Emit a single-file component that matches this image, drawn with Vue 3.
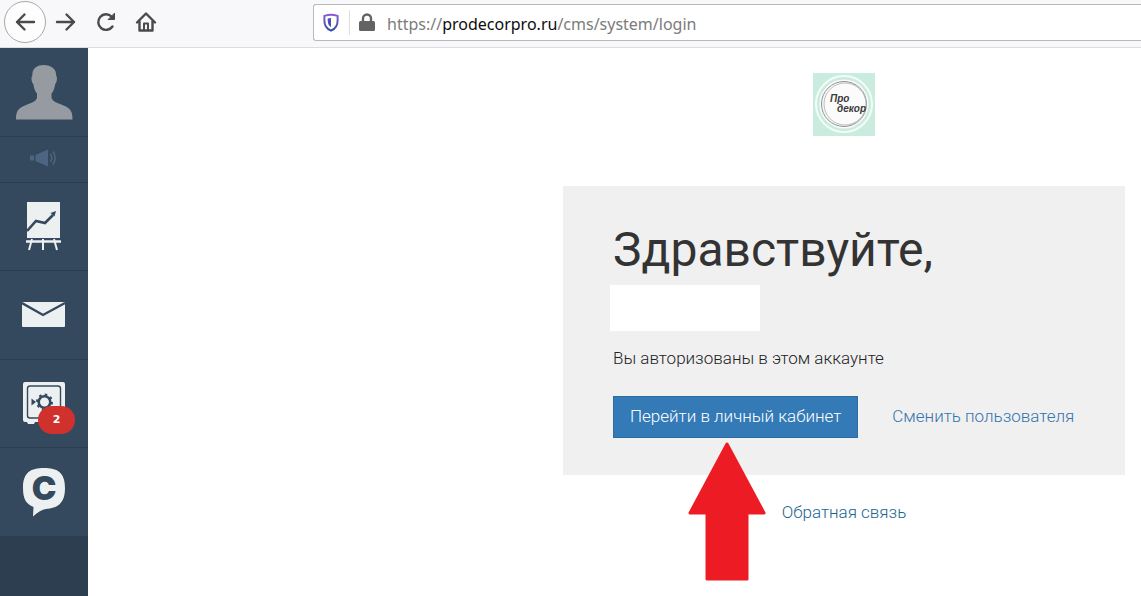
<script setup>
const url = { scheme: 'https://', host: 'prodecorpro.ru', path: '/cms/system/login' }
const notifications = 2
</script>

<template>
  <div class="window">
    <header class="toolbar">
      <nav class="nav-buttons" aria-label="Навигация">
        <button class="nav-btn back" type="button" aria-label="Назад">
          <svg width="24" height="24" viewBox="0 0 24 24" class="stroke"><path d="M21 12H4M11.500 4.500L4 12l7.500 7.500" /></svg>
        </button>
        <button class="nav-btn" type="button" aria-label="Вперёд">
          <svg width="24" height="24" viewBox="0 0 24 24" class="stroke"><path d="M3 12h17M12.500 4.500L20 12l-7.500 7.500" /></svg>
        </button>
        <button class="nav-btn" type="button" aria-label="Обновить">
          <svg width="24" height="24" viewBox="0 0 24 24" class="stroke"><path d="M18.500 16.500A7.800 7.800 0 1 1 17.500 6.500L19 8" /><path d="M20.500 3.500v6h-6z" class="solid" /></svg>
        </button>
        <button class="nav-btn" type="button" aria-label="Домой">
          <svg width="24" height="24" viewBox="0 0 24 24" class="stroke"><path d="M3 12.500L12 3.500l9 9M5.500 11v9.500h13V11" /><path d="M10 20v-6.500h4V20" class="door" /></svg>
        </button>
      </nav>
      <div class="address">
        <svg class="shield" width="18" height="20" viewBox="0 0 18 20">
          <defs>
            <linearGradient id="shieldFill" x1="0" y1="0" x2="0" y2="1">
              <stop offset="0" stop-color="#8a5bd0" />
              <stop offset="1" stop-color="#2f4fa8" />
            </linearGradient>
          </defs>
          <path d="M9 1.800c2.300 0 4.600.5 6.600 1.100v4.800c0 5-2.500 8.200-6.600 10-4.100-1.800-6.600-5-6.600-10V2.900C4.400 2.300 6.700 1.800 9 1.800z" fill="none" stroke="url(#shieldFill)" stroke-width="2" />
          <path d="M9 5v9.300c-2-1.300-3.300-3.500-3.300-6.500V5.500C6.800 5.200 7.900 5 9 5z" fill="#4a50b5" />
        </svg>
        <span class="divider"></span>
        <svg class="lock" width="16" height="20" viewBox="0 0 16 20">
          <rect x="0" y="8" width="16" height="10" rx="1.500" fill="#636363" />
          <path d="M4 9V5.500a4 4 0 0 1 8 0V9" fill="none" stroke="#636363" stroke-width="2.400" />
        </svg>
        <div class="url" role="textbox" contenteditable="true" spellcheck="false" aria-label="Адрес">{{ url.scheme }}<b>{{ url.host }}</b>{{ url.path }}</div>
      </div>
    </header>

    <div class="body">
      <nav class="sidebar" aria-label="Меню">
        <a class="item tall" href="#profile" aria-label="Профиль">
          <svg width="58" height="56" viewBox="0 0 58 56">
            <path d="M28.500 1C21 1 17 5 17.300 12c-1.400.5-.8 6.500 1 8 .8 5 2 7.500 3.700 9.500v4.500c-1.500 4-6 5-12 7.500C3 44.500 1 47 1 55.500h56.500c0-8.500-2-11-9-14-6-2.500-10.500-3.500-12-7.500v-4.500c1.700-2 2.900-4.500 3.700-9.500 1.800-1.500 2.400-7.500 1-8C41.500 5 36.500 1 28.500 1z" fill="#969ba1" />
          </svg>
        </a>
        <a class="item short" href="#news" aria-label="Новости">
          <svg width="28" height="20" viewBox="0 0 28 20" fill="#4c6580">
            <path d="M1 7.500h4v5H1zM6.500 7L19 1.500v17L6.500 13z" />
            <path d="M21.500 6c1.600 2.600 1.600 5.400 0 8M24 3.500c2.800 4.300 2.800 8.700 0 13" fill="none" stroke="#4c6580" stroke-width="1.500" />
          </svg>
        </a>
        <a class="item" href="#stats" aria-label="Статистика">
          <svg width="38" height="50" viewBox="0 0 38 50">
            <path d="M2 1h33v36H2z" fill="#ecf0f1" />
            <path d="M2 30l9-10 9 2 8-8" fill="none" stroke="#34495e" stroke-width="2.600" />
            <path d="M31 10l-1.500 5.500-4-3.500z" fill="#34495e" />
            <path d="M1 40.500h35" stroke="#ecf0f1" stroke-width="2.600" />
            <path d="M3 37.500h31" stroke="#34495e" stroke-width="1" />
            <path d="M7 38L4 49M18 38v11M29 38l3 11" stroke="#ecf0f1" stroke-width="2" />
          </svg>
        </a>
        <a class="item tall" href="#messages" aria-label="Сообщения">
          <svg width="44" height="28" viewBox="0 0 44 28">
            <rect x="0" y="1" width="43" height="25" rx="1" fill="#ecf0f1" />
            <path d="M0 2l21 12L43 2" fill="none" stroke="#34495e" stroke-width="2.400" />
          </svg>
        </a>
        <a class="item" href="#safe" aria-label="Сейф">
          <span class="badged">
            <svg width="42" height="44" viewBox="0 0 42 44">
              <path d="M2 1h38q2 0 2 2v36q0 2-2 2h-3l-1 2h-5l-1-2H12l-1 2H5l-1-2H2q-2 0-2-2V3q0-2 2-2z" fill="#ecf0f1" />
              <rect x="4.500" y="5" width="33" height="32" rx="2.500" fill="none" stroke="#34495e" stroke-width="1.400" />
              <circle cx="21.500" cy="21" r="5.800" fill="none" stroke="#34495e" stroke-width="2.600" />
              <circle cx="21.500" cy="21" r="7.500" fill="none" stroke="#34495e" stroke-width="2" stroke-dasharray="2.500 3.390" />
              <path d="M8.500 17.500l4.500 3.500-4.500 3.500z" fill="#34495e" />
            </svg>
            <span class="badge">{{ notifications }}</span>
          </span>
        </a>
        <a class="item tall" href="#chat" aria-label="Чат">
          <svg width="42" height="50" viewBox="0 0 42 50">
            <path d="M21 1C34 1 42 5 42 21s-8 20-19 21c-4 .5-8 3-13 7.500l.5-9.500C3 37 0 32 0 21 0 5 8 1 21 1z" fill="#ecf0f1" />
            <text x="21" y="33" class="chat-letter" text-anchor="middle">C</text>
          </svg>
        </a>
      </nav>

      <main class="content">
        <div class="column">
          <svg class="brand" width="62" height="63" viewBox="0 0 62 63" role="img" aria-label="Про декор">
            <rect width="62" height="63" fill="#c9ecdf" />
            <circle cx="31" cy="31" r="28" fill="none" stroke="#f4fcf8" stroke-width="2" />
            <circle cx="31" cy="31" r="24.500" fill="#fbfbfb" />
            <circle cx="31" cy="31" r="22.500" fill="none" stroke="#8f8f8f" stroke-width="1" />
            <circle cx="32" cy="31" r="21" fill="none" stroke="#bcbcbc" stroke-width="1" />
            <text x="17" y="29" class="brand-text">Про</text>
            <text x="24" y="39" class="brand-text">декор</text>
          </svg>

          <section class="panel">
            <h1>Здравствуйте,</h1>
            <div class="user-name"></div>
            <p>Вы авторизованы в этом аккаунте</p>
            <div class="actions">
              <div class="primary-wrap">
                <button class="primary" type="button">Перейти в личный кабинет</button>
                <svg class="pointer" width="80" height="140" viewBox="0 0 80 140" aria-hidden="true">
                  <path d="M40 3L77 72H60v66H20V72H3z" fill="#ed1c24" stroke="#ed1c24" stroke-width="3" stroke-linejoin="round" />
                </svg>
              </div>
              <a class="switch" href="#switch">Сменить пользователя</a>
            </div>
          </section>
          <a class="feedback" href="#feedback">Обратная связь</a>
        </div>
      </main>
    </div>
  </div>
</template>

<style>
body {
  margin: 0;
  background: #fff;
}
</style>

<style scoped>
.window {
  min-height: 100vh;
  display: flex;
  flex-direction: column;
  font-family: "Roboto", "Liberation Sans", sans-serif;
  font-size: 17px;
  font-weight: 300;
  color: #222;
}
.toolbar {
  display: flex;
  align-items: flex-start;
  gap: 147px;
  height: 47px;
  background: #f8f8fa;
  border-bottom: 1px solid #dcdcde;
}
.nav-buttons {
  display: flex;
  flex: none;
  align-items: center;
  padding: 1px 0 0 4px;
}
.nav-btn {
  display: grid;
  place-items: center;
  width: 40px;
  height: 42px;
  padding: 0;
  border: 0;
  background: none;
}
.nav-btn.back {
  width: 42px;
  border: 1px solid #a9a9ab;
  border-radius: 50%;
  background: #fdfdfe;
}
.stroke {
  fill: none;
  stroke: #4a4a4c;
  stroke-width: 2.4;
  stroke-linecap: round;
  stroke-linejoin: round;
}
.solid {
  fill: #4a4a4c;
  stroke-width: 1;
}
.door {
  stroke-width: 2;
}
.address {
  display: flex;
  flex: 1;
  min-width: 0;
  align-items: center;
  height: 35px;
  margin-top: 4px;
  padding-left: 8px;
  border: 1px solid #b9b9bc;
  border-right: 0;
  border-radius: 3px 0 0 3px;
  background: #fff;
}
.divider {
  width: 1px;
  height: 25px;
  margin: 0 9px;
  background: #dedee0;
}
.url {
  margin-left: 12px;
  padding-top: 2px;
  outline: 0;
  font-family: "Noto Sans", "Open Sans", sans-serif;
  font-size: 16px;
  font-weight: 400;
  line-height: 24px;
  white-space: nowrap;
  color: #7c7c7c;
}
.url b {
  font-weight: 400;
  color: #0c0c0d;
}
.body {
  display: flex;
  flex: 1;
}
.sidebar {
  flex: none;
  width: 88px;
  background: #2c3e50;
}
.item {
  display: grid;
  place-items: center;
  box-sizing: border-box;
  height: 88px;
  padding-bottom: 2px;
  border-bottom: 1px solid #2b3d50;
  background: #34495e;
}
.item.tall {
  height: 89px;
  padding-bottom: 0;
}
.item.short {
  height: 46px;
  padding: 0 2px 3px 0;
}
.item svg {
  display: block;
}
.badged {
  position: relative;
}
.badge {
  position: absolute;
  left: 15px;
  top: 25px;
  width: 37px;
  border-radius: 14px;
  background: #d0312d;
  color: #fff;
  font: bold 11px/28px "DejaVu Sans", sans-serif;
  text-align: center;
}
.chat-letter {
  font: 900 33px "Inter", sans-serif;
  fill: #34495e;
}
.content {
  display: flex;
  flex: 1;
  justify-content: flex-end;
  align-items: flex-start;
  padding: 25px 16px 0;
}
.column {
  display: flex;
  flex-direction: column;
  align-items: center;
  width: 562px;
}
.brand {
  display: block;
}
.brand-text {
  font: italic bold 10px "Liberation Sans", sans-serif;
  fill: #3c3c3c;
}
.panel {
  box-sizing: border-box;
  width: 100%;
  margin-top: 50px;
  padding: 36px 50px 37px;
  background: #f0f0f0;
}
h1 {
  margin: 0;
  font-size: 48px;
  font-weight: 400;
  line-height: 56px;
  color: #333;
}
.user-name {
  width: 150px;
  height: 46px;
  margin: 7px 0 0 -3px;
  background: #fff;
}
p {
  margin: 15px 0 26px;
  line-height: 24px;
}
.actions {
  display: flex;
  align-items: center;
  gap: 34px;
  white-space: nowrap;
}
.primary-wrap {
  position: relative;
}
.primary {
  display: block;
  height: 42px;
  padding: 0 16px 2px;
  border: 1px solid #2e6da4;
  background: #337ab7;
  color: #fff;
  font: inherit;
}
.pointer {
  position: absolute;
  left: 74px;
  top: 45px;
}
a {
  text-decoration: none;
}
.switch {
  padding-bottom: 2px;
  color: #3573ab;
}
.feedback {
  margin-top: 25px;
  line-height: 24px;
  color: #1a6690;
}
</style>
